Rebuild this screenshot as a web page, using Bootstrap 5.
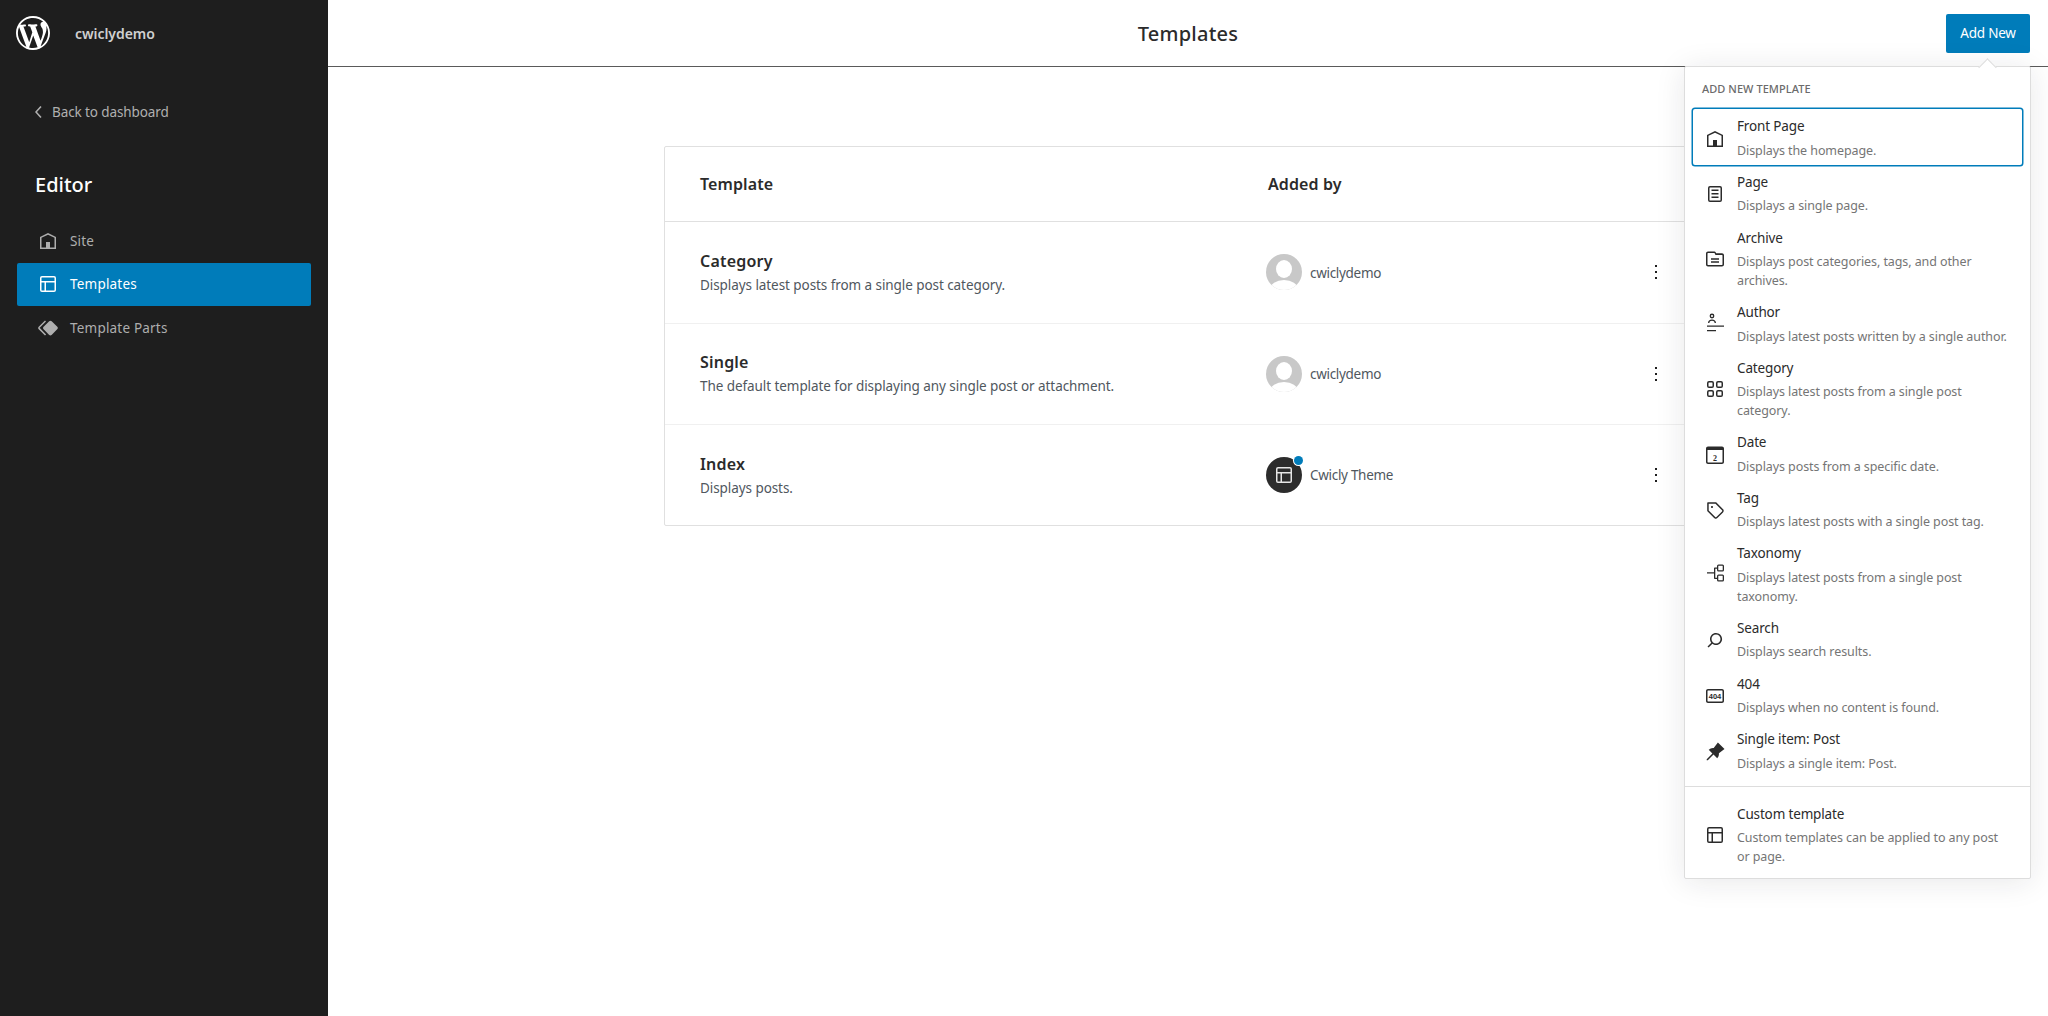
<!DOCTYPE html>
<html lang="en">
<head>
<meta charset="utf-8">
<title>Templates</title>
<link href="https://cdn.jsdelivr.net/npm/bootstrap@5.3.0/dist/css/bootstrap.min.css" rel="stylesheet">
<style>
html,body{height:100%}
body{font-family:"Noto Sans","Open Sans",sans-serif;font-size:13px;color:#1e1e1e;background:#fff;overflow:hidden}
svg{display:block;flex:none;fill:currentColor}
.wp-shell{height:1016px}
.wp-side{width:328px;background:#1e1e1e;color:#c4c4c4}
.wp-brand{height:66px;padding-left:16px;gap:25px;font-weight:600;font-size:14px;letter-spacing:-.05px;color:#d0d0d0}
.wp-logo{color:#fff}
.wp-back{margin:31px 0 0 27px;gap:1px;height:30px;color:#b0b0b0;font-size:13.5px;letter-spacing:-.1px}
.wp-editor{margin:44px 0 20px 35px;font-size:20px;font-weight:500;line-height:28px;color:#fff;letter-spacing:0}
.wp-navitem{margin:0 17px;height:43.5px;padding:0 0 0 19px;gap:10px;color:#aeaeae;border-radius:2px;font-size:13.5px;letter-spacing:.2px;background:none;border:0}
.wp-navitem.is-on{background:#007cba;color:#fff}
.wp-main{min-width:0}
.wp-top{height:67px;border-bottom:1px solid #5a5a5a;padding-right:18px}
.wp-title{font-size:20px;font-weight:500;letter-spacing:.25px;margin:0;line-height:28px;left:0;right:0;top:20px;color:#2b2b2b}
.wp-add{background:#007cba;color:#fff;border:0;border-radius:2px;width:84px;height:39px;padding:0;font-size:13.5px;letter-spacing:-.2px}
.wp-add:hover{background:#006ba1;color:#fff}
.wp-tablewrap{width:1048px;margin:79px auto 0;border:1px solid #e0e0e0;border-radius:2px}
.wp-head{height:75px;border-bottom:1px solid #e0e0e0;font-size:16px;font-weight:600;letter-spacing:.1px;padding-left:35px;color:#2b2b2b}
.wp-row{height:101.5px;border-bottom:1px solid #f0f0f0;padding-left:35px}
.wp-row:last-child{border-bottom:0;height:100px}
.wp-c1{width:568px}
.wp-name{font-size:16px;font-weight:600;line-height:22px;letter-spacing:.2px;color:#2b2b2b}
.wp-desc{font-size:13.5px;line-height:20px;color:#50575e;letter-spacing:-.07px;margin-top:3px}
.wp-by{gap:8px;color:#50575e;font-size:13.5px;letter-spacing:-.3px;margin-left:-2px}
.wp-byname{padding-top:1px}
.wp-avatar{width:36px;height:36px;border-radius:50%;background:#c8c8c8;overflow:hidden}
.wp-avatar svg{fill:#fff}
.wp-themeav{width:36px;height:36px;border-radius:50%;background:#2c2c2c;color:#e6e6e6}
.wp-dot{width:9px;height:9px;border-radius:50%;background:#007cba;top:-1px;right:-1px;box-shadow:0 0 0 1px #fff}
.wp-kebab{width:24px;height:24px;margin-left:auto;margin-right:43px;color:#1e1e1e}
.wp-pop{width:347px;top:66px;right:17px;background:#fff;border:1px solid #ddd;border-radius:2px;box-shadow:0 3px 30px rgba(25,30,35,.1)}
.wp-pop::before{content:"";position:absolute;top:-6px;left:296px;width:13px;height:13px;background:#fff;border-left:1px solid #ddd;border-top:1px solid #ddd;transform:rotate(45deg)}
.wp-poplabel{font-size:11px;font-weight:500;color:#6b6b6b;text-transform:uppercase;letter-spacing:.05px;line-height:16px;margin:14px 0 12px 17px}
.wp-list{padding:0 8px}
.wp-item{gap:10.5px;padding:9px 12px 5.6px 9.5px;border:0;background:none;color:#2b2b2b;border-radius:2px;width:100%;text-align:left;position:relative}
.wp-item.is-focus{box-shadow:0 0 0 1.5px #007cba}
.wp-itemt{font-size:13.5px;line-height:18px;letter-spacing:-.15px;margin-bottom:6.7px;margin-top:-1px}
.wp-itemd{font-size:12.5px;line-height:18.5px;color:#757575;letter-spacing:-.09px;margin-bottom:-1px}
.wp-group2{border-top:1px solid #ddd;margin-top:8px;padding-top:9.5px;padding-bottom:7.5px}
.wp-txt{display:block;max-width:272px}
</style>
</head>
<body>
<div class="d-flex wp-shell">
  <aside class="wp-side d-flex flex-column flex-shrink-0">
    <div class="wp-brand d-flex align-items-center">
      <svg class="wp-logo" width="34" height="34" viewBox="0 0 20 20"><path d="M20 10c0-5.51-4.49-10-10-10C4.48 0 0 4.49 0 10c0 5.52 4.48 10 10 10 5.51 0 10-4.48 10-10zM7.78 15.37L4.37 6.22c.55-.02 1.17-.08 1.17-.08.5-.06.44-1.13-.06-1.11 0 0-1.45.11-2.37.11-.18 0-.37 0-.58-.01C4.12 2.69 6.87 1.11 10 1.11c2.33 0 4.45.87 6.05 2.34-.68-.11-1.65.39-1.65 1.58 0 .74.45 1.36.9 2.1.35.61.55 1.36.55 2.46 0 1.49-1.4 5-1.4 5l-3.03-8.37c.54-.02.82-.17.82-.17.5-.05.44-1.25-.06-1.22 0 0-1.44.12-2.38.12-.87 0-2.33-.12-2.33-.12-.5-.03-.56 1.2-.06 1.22l.92.08 1.26 3.41zM17.41 10c.24-.64.74-1.87.43-4.25.7 1.29 1.05 2.71 1.05 4.25 0 3.29-1.73 6.24-4.4 7.78.97-2.59 1.94-5.2 2.92-7.78zM6.1 18.09C3.12 16.65 1.11 13.53 1.11 10c0-1.3.23-2.48.72-3.59C3.25 10.3 4.67 14.2 6.1 18.09zm4.03-6.63l2.58 6.98c-.86.29-1.76.45-2.71.45-.79 0-1.57-.11-2.29-.33.81-2.38 1.62-4.74 2.42-7.1z"/></svg>
      <span>cwiclydemo</span>
    </div>
    <a class="wp-back d-flex align-items-center text-decoration-none" href="#">
      <svg width="24" height="24" viewBox="0 0 24 24"><path d="M14.6 7l-1.2-1L8 12l5.4 6 1.2-1-4.6-5z"/></svg>
      <span>Back to dashboard</span>
    </a>
    <h2 class="wp-editor">Editor</h2>
    <div class="nav flex-column">
      <a class="wp-navitem d-flex align-items-center text-decoration-none" href="#"><svg width="24" height="24" viewBox="0 0 24 24"><path d="M12 4L4 7.9V20h16V7.9L12 4zm6.5 14.5H14V13h-4v5.5H5.5V8.8L12 5.7l6.5 3.1v9.7z"/></svg><span>Site</span></a>
      <a class="wp-navitem is-on d-flex align-items-center text-decoration-none" href="#"><svg width="24" height="24" viewBox="0 0 24 24"><path d="M18 5.5H6a.5.5 0 00-.5.5v3h13V6a.5.5 0 00-.5-.5zm.5 5H10v8h8a.5.5 0 00.5-.5v-7.5zm-10 0h-3V18a.5.5 0 00.5.5h2.5v-8zM6 4h12a2 2 0 012 2v12a2 2 0 01-2 2H6a2 2 0 01-2-2V6a2 2 0 012-2z"/></svg><span>Templates</span></a>
      <a class="wp-navitem d-flex align-items-center text-decoration-none" href="#"><svg width="24" height="24" viewBox="0 0 24 24"><path d="M21.3 10.8l-5.6-5.6c-.7-.7-1.8-.7-2.5 0l-5.6 5.6c-.7.7-.7 1.8 0 2.5l5.6 5.6c.3.3.8.5 1.2.5s.9-.2 1.2-.5l5.6-5.6c.8-.7.8-1.9.1-2.5zm-17.6 1L10 5.5l-1-1-6.3 6.3c-.7.7-.7 1.8 0 2.5L9 19.5l1.1-1.1-6.3-6.3c-.2 0-.2-.2-.1-.3z"/></svg><span>Template Parts</span></a>
    </div>
  </aside>

  <main class="wp-main flex-grow-1 position-relative">
    <header class="wp-top d-flex align-items-center justify-content-end position-relative">
      <h1 class="wp-title position-absolute text-center">Templates</h1>
      <button type="button" class="btn wp-add">Add New</button>
    </header>

    <section class="wp-tablewrap">
      <div class="wp-head d-flex align-items-center"><div class="wp-c1">Template</div><div>Added by</div></div>
      <div class="wp-row d-flex align-items-center">
        <div class="wp-c1"><div class="wp-name">Category</div><div class="wp-desc">Displays latest posts from a single post category.</div></div>
        <div class="wp-by d-flex align-items-center"><div class="wp-avatar"><svg width="36" height="36" viewBox="0 0 36 36"><ellipse cx="18" cy="15" rx="8" ry="9"/><ellipse cx="18" cy="35" rx="14" ry="9"/></svg></div><span class="wp-byname">cwiclydemo</span></div>
        <div class="wp-kebab"><svg width="24" height="24" viewBox="0 0 24 24"><path d="M13 19h-2v-2h2v2zm0-6h-2v-2h2v2zm0-6h-2V5h2v2z"/></svg></div>
      </div>
      <div class="wp-row d-flex align-items-center">
        <div class="wp-c1"><div class="wp-name">Single</div><div class="wp-desc">The default template for displaying any single post or attachment.</div></div>
        <div class="wp-by d-flex align-items-center"><div class="wp-avatar"><svg width="36" height="36" viewBox="0 0 36 36"><ellipse cx="18" cy="15" rx="8" ry="9"/><ellipse cx="18" cy="35" rx="14" ry="9"/></svg></div><span class="wp-byname">cwiclydemo</span></div>
        <div class="wp-kebab"><svg width="24" height="24" viewBox="0 0 24 24"><path d="M13 19h-2v-2h2v2zm0-6h-2v-2h2v2zm0-6h-2V5h2v2z"/></svg></div>
      </div>
      <div class="wp-row d-flex align-items-center">
        <div class="wp-c1"><div class="wp-name">Index</div><div class="wp-desc">Displays posts.</div></div>
        <div class="wp-by d-flex align-items-center"><div class="wp-themeav position-relative d-flex align-items-center justify-content-center"><svg width="24" height="24" viewBox="0 0 24 24"><path d="M18 5.5H6a.5.5 0 00-.5.5v3h13V6a.5.5 0 00-.5-.5zm.5 5H10v8h8a.5.5 0 00.5-.5v-7.5zm-10 0h-3V18a.5.5 0 00.5.5h2.5v-8zM6 4h12a2 2 0 012 2v12a2 2 0 01-2 2H6a2 2 0 01-2-2V6a2 2 0 012-2z"/></svg><span class="wp-dot position-absolute"></span></div><span class="wp-byname">Cwicly Theme</span></div>
        <div class="wp-kebab"><svg width="24" height="24" viewBox="0 0 24 24"><path d="M13 19h-2v-2h2v2zm0-6h-2v-2h2v2zm0-6h-2V5h2v2z"/></svg></div>
      </div>
    </section>

    <div class="wp-pop position-absolute">
      <div class="wp-poplabel">Add new template</div>
      <div class="wp-list">
        <button type="button" class="wp-item is-focus d-flex align-items-center"><svg width="24" height="24" viewBox="0 0 24 24"><path d="M12 4L4 7.9V20h16V7.9L12 4zm6.5 14.5H14V13h-4v5.5H5.5V8.8L12 5.7l6.5 3.1v9.7z"/></svg><span class="wp-txt"><span class="d-block wp-itemt">Front Page</span><span class="d-block wp-itemd">Displays the homepage.</span></span></button>
        <button type="button" class="wp-item d-flex align-items-center"><svg width="24" height="24" viewBox="0 0 24 24"><path d="M15.5 7.5h-7V9h7V7.5Zm-7 3.5h7v1.5h-7V11Zm7 3.5h-7V16h7v-1.5Z"/><path d="M17 4H7a2 2 0 0 0-2 2v12a2 2 0 0 0 2 2h10a2 2 0 0 0 2-2V6a2 2 0 0 0-2-2Zm-10 1.5h10a.5.5 0 0 1 .5.5v12a.5.5 0 0 1-.5.5H7a.5.5 0 0 1-.5-.5V6a.5.5 0 0 1 .5-.5Z"/></svg><span class="wp-txt"><span class="d-block wp-itemt">Page</span><span class="d-block wp-itemd">Displays a single page.</span></span></button>
        <button type="button" class="wp-item d-flex align-items-center"><svg width="24" height="24" viewBox="0 0 24 24"><path d="M19 6.2h-5.900l-.6-1.100C12.400 4.700 12 4.500 11.500 4.500H5c-1.100 0-2 .9-2 2v11c0 1.100.9 2 2 2h14c1.100 0 2-.9 2-2V8.200c0-1.100-.9-2-2-2zm.5 11.300c0 .3-.2.5-.5.5H5c-.3 0-.5-.2-.5-.5v-11c0-.3.2-.5.5-.5h6.500l1 2H19c.3 0 .5.2.5.5v9zM8 12.800h8v-1.500H8v1.500zm0 3h8v-1.500H8v1.500z"/></svg><span class="wp-txt"><span class="d-block wp-itemt">Archive</span><span class="d-block wp-itemd">Displays post categories, tags, and other archives.</span></span></button>
        <button type="button" class="wp-item d-flex align-items-center"><svg width="24" height="24" viewBox="0 0 24 24"><path fill-rule="evenodd" d="M9 1.600a2.400 2.400 0 110 4.800 2.400 2.400 0 010-4.800zm0 1.300a1.100 1.100 0 100 2.200 1.100 1.100 0 000-2.200zM5 11c0-2.200 1.600-3.500 4-3.500s4 1.300 4 3.500h-1.400c0-1.400-1-2.200-2.600-2.200s-2.600.8-2.600 2.200H5z"/><path d="M4 13.400h17v1.300H4zM4 18h9v1.300H4z"/></svg><span class="wp-txt"><span class="d-block wp-itemt">Author</span><span class="d-block wp-itemd">Displays latest posts written by a single author.</span></span></button>
        <button type="button" class="wp-item d-flex align-items-center"><svg width="24" height="24" viewBox="0 0 24 24"><path fill-rule="evenodd" d="M6 5.500h3a.5.5 0 01.5.5v3a.5.5 0 01-.5.5H6a.5.5 0 01-.5-.5V6a.5.5 0 01.5-.5zM4 6a2 2 0 012-2h3a2 2 0 012 2v3a2 2 0 01-2 2H6a2 2 0 01-2-2V6zm11-.5h3a.5.5 0 01.5.5v3a.5.5 0 01-.5.5h-3a.5.5 0 01-.5-.5V6a.5.5 0 01.5-.5zM13 6a2 2 0 012-2h3a2 2 0 012 2v3a2 2 0 01-2 2h-3a2 2 0 01-2-2V6zm5 8.500h-3a.5.5 0 00-.5.5v3a.5.5 0 00.5.5h3a.5.5 0 00.5-.5v-3a.5.5 0 00-.5-.5zM15 13a2 2 0 00-2 2v3a2 2 0 002 2h3a2 2 0 002-2v-3a2 2 0 00-2-2h-3zm-9 1.500h3a.5.5 0 01.5.5v3a.5.5 0 01-.5.5H6a.5.5 0 01-.5-.5v-3a.5.5 0 01.5-.5zM4 15a2 2 0 012-2h3a2 2 0 012 2v3a2 2 0 01-2 2H6a2 2 0 01-2-2v-3z"/></svg><span class="wp-txt"><span class="d-block wp-itemt">Category</span><span class="d-block wp-itemd">Displays latest posts from a single post category.</span></span></button>
        <button type="button" class="wp-item d-flex align-items-center"><svg width="24" height="24" viewBox="0 0 24 24"><path fill-rule="evenodd" d="M5 3.500h14c1.100 0 2 .9 2 2V19c0 1.100-.9 2-2 2H5c-1.100 0-2-.9-2-2V5.500c0-1.100.9-2 2-2zM4.500 7v12c0 .3.2.5.5.5h14c.3 0 .5-.2.5-.5V7h-15z"/><text x="12" y="17.500" text-anchor="middle" font-size="8" font-weight="700" font-family="'Liberation Serif',serif">2</text></svg><span class="wp-txt"><span class="d-block wp-itemt">Date</span><span class="d-block wp-itemd">Displays posts from a specific date.</span></span></button>
        <button type="button" class="wp-item d-flex align-items-center"><svg width="24" height="24" viewBox="0 0 24 24"><path d="M20.100 11.200l-6.700-6.700c-.1-.1-.3-.2-.5-.2H5c-.4-.1-.8.3-.8.7v7.800c0 .2.1.4.2.5l6.700 6.700c.2.2.5.4.7.5s.6.2.9.2c.3 0 .6-.1.9-.2.3-.1.5-.3.8-.5l5.600-5.600c.4-.4.7-1 .7-1.600.1-.6-.2-1.200-.6-1.600zM19 13.400L13.400 19c-.1.1-.2.1-.3.2-.2.1-.4.1-.6 0-.1 0-.2-.1-.3-.2l-6.500-6.500V5.800h6.800l6.500 6.500c.2.2.2.4.2.6 0 .1 0 .3-.2.5zM9 8c-.6 0-1 .4-1 1s.4 1 1 1 1-.4 1-1-.4-1-1-1z"/></svg><span class="wp-txt"><span class="d-block wp-itemt">Tag</span><span class="d-block wp-itemd">Displays latest posts with a single post tag.</span></span></button>
        <button type="button" class="wp-item d-flex align-items-center"><svg width="24" height="24" viewBox="0 0 24 24"><path fill-rule="evenodd" d="M15.500 1.500H19.500a1.500 1.500 0 011.500 1.500v4a1.500 1.500 0 01-1.500 1.500h-4A1.500 1.500 0 0114 7V3a1.500 1.500 0 011.500-1.500zm0 1.300a.2.2 0 00-.2.2v4c0 .1.1.2.2.2h4a.2.2 0 00.2-.2V3a.2.2 0 00-.2-.2zM15.500 11.500h4a1.500 1.500 0 011.500 1.500v4a1.500 1.500 0 01-1.500 1.500h-4A1.500 1.500 0 0114 17v-4a1.500 1.500 0 011.500-1.500zm0 1.300a.2.2 0 00-.2.2v4c0 .1.1.2.2.2h4a.2.2 0 00.2-.2v-4a.2.2 0 00-.2-.2z"/><path d="M4 9.200h7V5.500c0-.6.400-1 1-1h2v1.300h-1.700v8.900H14V16h-2c-.6 0-1-.4-1-1v-4.500H4z"/></svg><span class="wp-txt"><span class="d-block wp-itemt">Taxonomy</span><span class="d-block wp-itemd">Displays latest posts from a single post taxonomy.</span></span></button>
        <button type="button" class="wp-item d-flex align-items-center"><svg width="24" height="24" viewBox="0 0 24 24"><path d="M13 5c-3.300 0-6 2.700-6 6 0 1.400.5 2.700 1.300 3.700l-3.800 3.800 1.100 1.100 3.800-3.800c1 .8 2.300 1.300 3.700 1.300 3.300 0 6-2.700 6-6S16.300 5 13 5zm0 10.500c-2.500 0-4.500-2-4.500-4.500s2-4.500 4.500-4.500 4.500 2 4.500 4.500-2 4.500-4.500 4.500z"/></svg><span class="wp-txt"><span class="d-block wp-itemt">Search</span><span class="d-block wp-itemd">Displays search results.</span></span></button>
        <button type="button" class="wp-item d-flex align-items-center"><svg width="24" height="24" viewBox="0 0 24 24"><path d="M19 5H5c-1.100 0-2 .9-2 2v10c0 1.100.9 2 2 2h14c1.100 0 2-.9 2-2V7c0-1.100-.9-2-2-2zm.5 12c0 .3-.2.5-.5.5H5c-.3 0-.5-.2-.5-.5V7c0-.3.2-.5.5-.5h14c.3 0 .5.2.5.5v10z"/><text x="12" y="15" text-anchor="middle" font-size="7.500" font-weight="700" font-family="'Liberation Sans',sans-serif">404</text></svg><span class="wp-txt"><span class="d-block wp-itemt">404</span><span class="d-block wp-itemd">Displays when no content is found.</span></span></button>
        <button type="button" class="wp-item d-flex align-items-center"><svg width="24" height="24" viewBox="0 0 24 24"><path d="m21.500 9.100-6.600-6.600-4.200 5.600c-1.200-.1-2.400.1-3.600.7-.1 0-.1.1-.2.1-.5.3-.9.6-1.200.9l3.700 3.700-5.700 5.700v1.100h1.100l5.700-5.700 3.700 3.700c.4-.4.7-.8.9-1.200.1-.1.1-.2.2-.3.6-1.100.8-2.400.6-3.600l5.600-4.100z"/></svg><span class="wp-txt"><span class="d-block wp-itemt">Single item: Post</span><span class="d-block wp-itemd">Displays a single item: Post.</span></span></button>
      </div>
      <div class="wp-list wp-group2">
        <button type="button" class="wp-item d-flex align-items-center"><svg width="24" height="24" viewBox="0 0 24 24"><path d="M18 5.500H6a.5.5 0 00-.5.5v3h13V6a.5.5 0 00-.5-.5zm.5 5H10v8h8a.5.5 0 00.5-.5v-7.500zm-10 0h-3V18a.5.5 0 00.5.5h2.500v-8zM6 4h12a2 2 0 012 2v12a2 2 0 01-2 2H6a2 2 0 01-2-2V6a2 2 0 012-2z"/></svg><span class="wp-txt"><span class="d-block wp-itemt">Custom template</span><span class="d-block wp-itemd">Custom templates can be applied to any post or page.</span></span></button>
      </div>
    </div>
  </main>
</div>
<script src="https://cdn.jsdelivr.net/npm/bootstrap@5.3.0/dist/js/bootstrap.bundle.min.js"></script>
</body>
</html>
